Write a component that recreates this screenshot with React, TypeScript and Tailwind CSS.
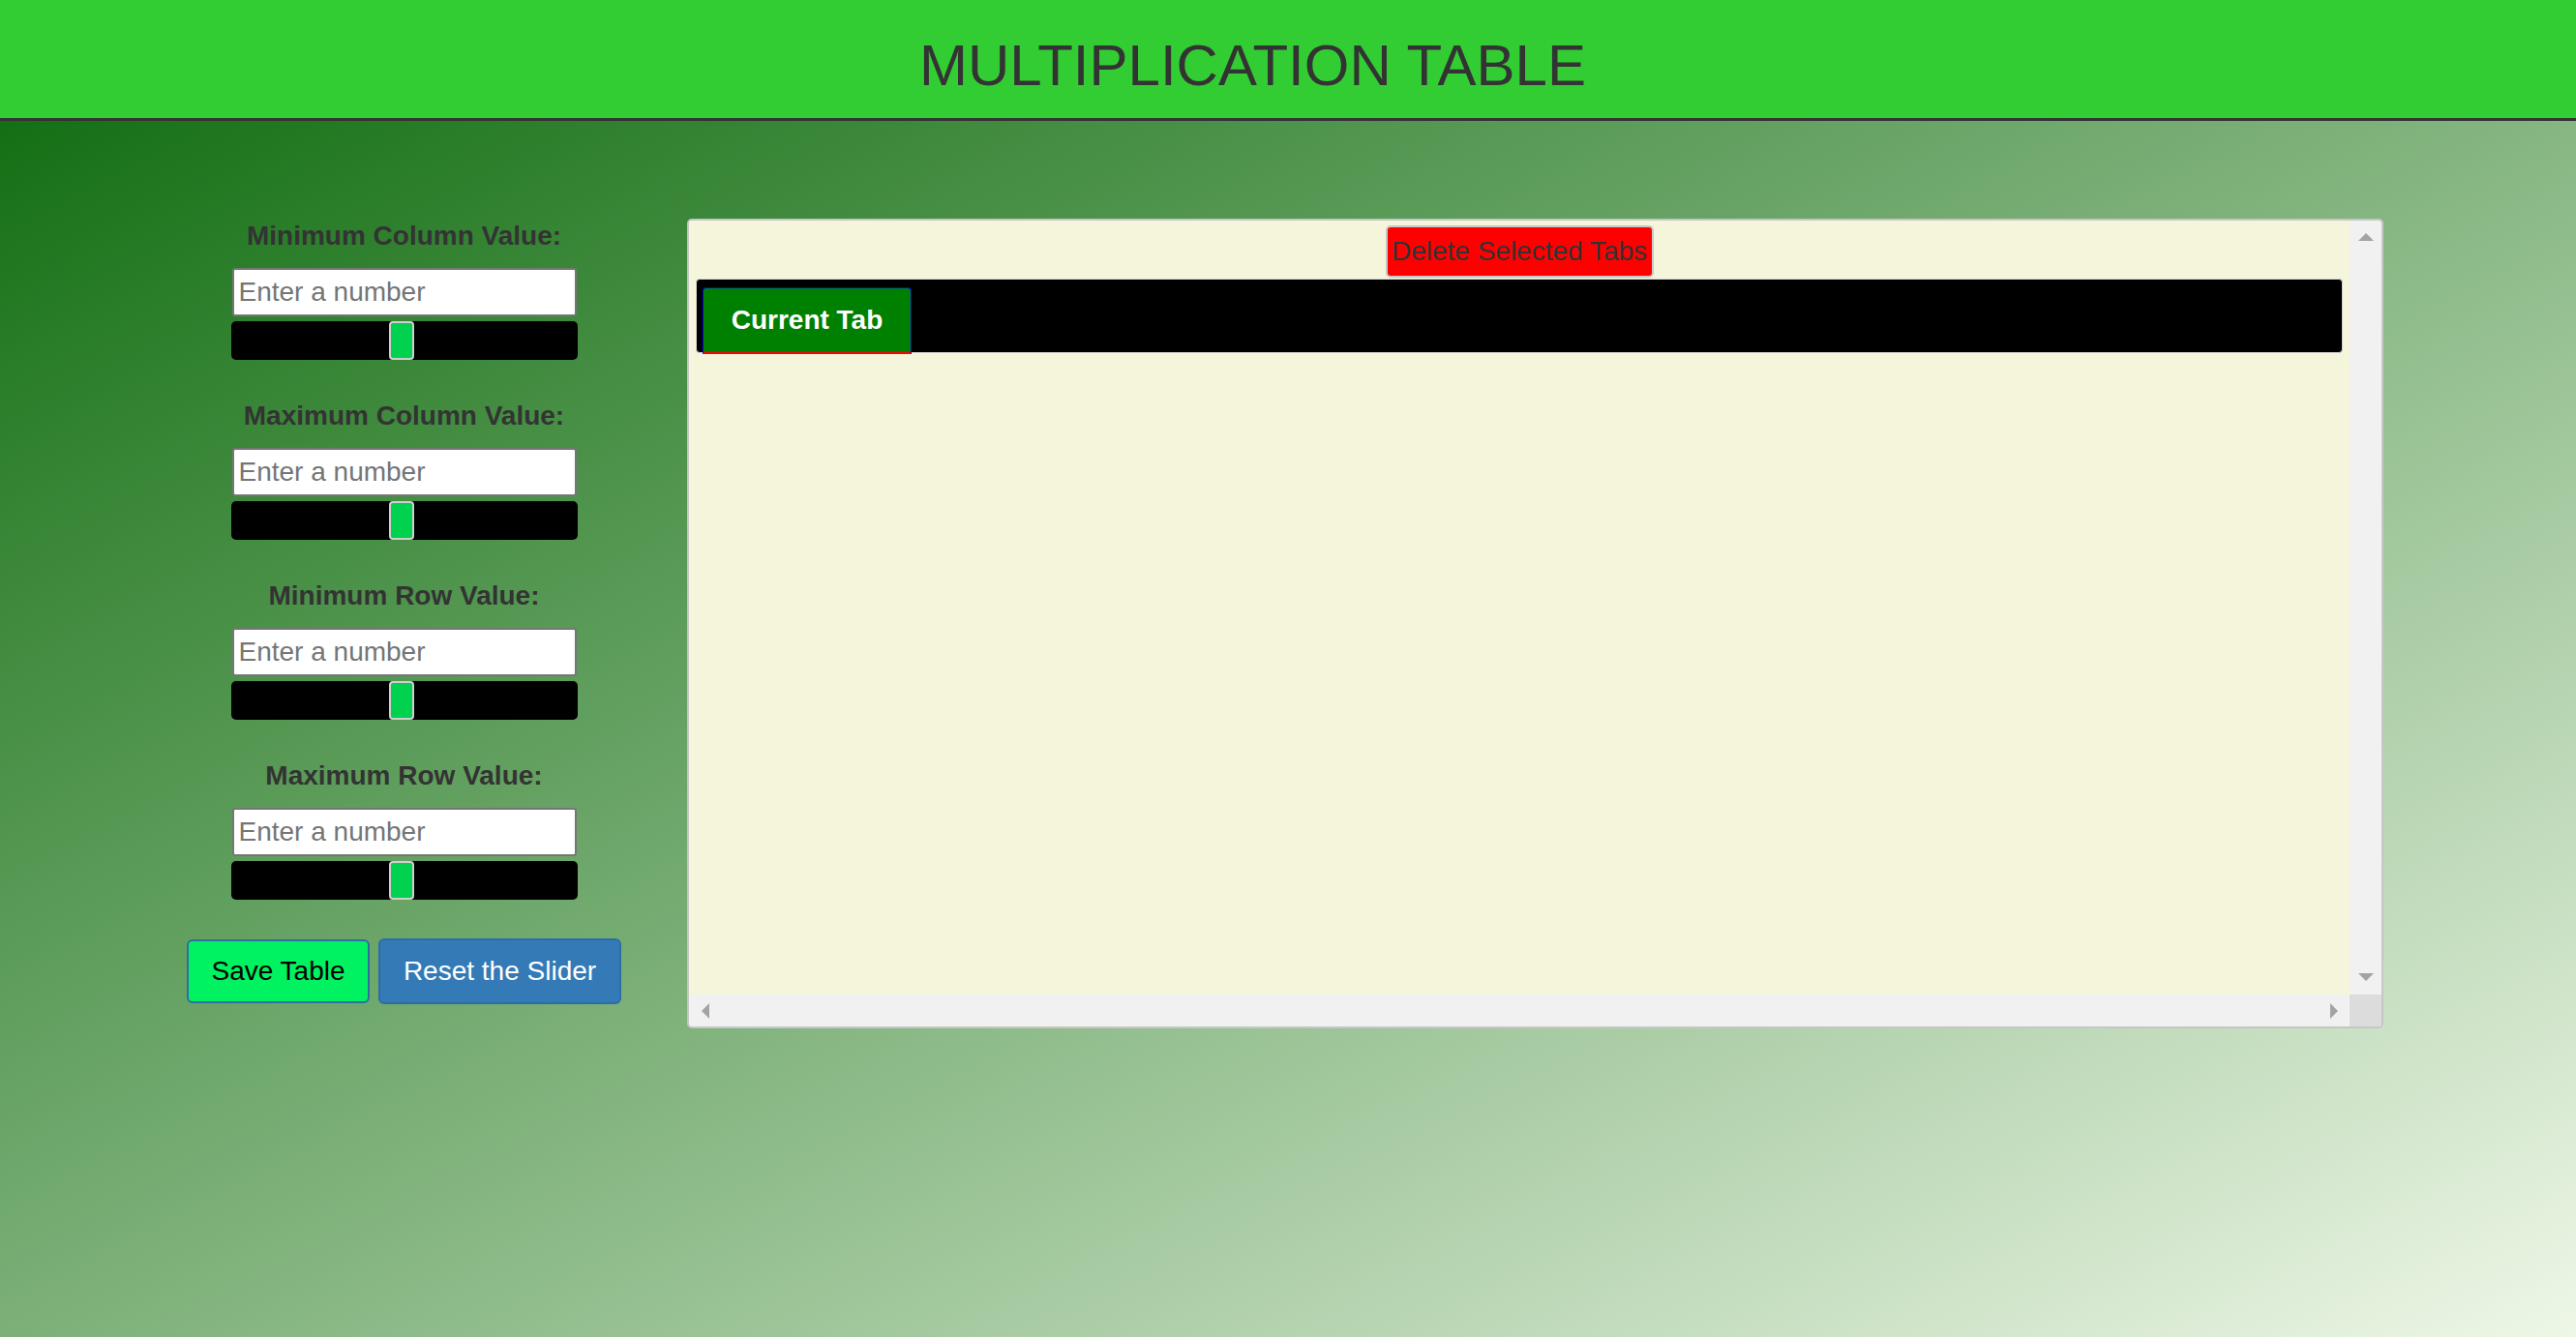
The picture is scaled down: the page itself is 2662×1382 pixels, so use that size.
import React from "react";

const FONT = "font-['Liberation_Sans',Arial,Helvetica,sans-serif]";

function Field({ label }: { label: string }) {
  return (
    <div className="flex flex-col items-center">
      <div className="text-[28px] leading-[32px] font-bold text-[#333] whitespace-nowrap">{label}</div>
      <input
        type="text"
        placeholder="Enter a number"
        className={`mt-[17px] w-[356px] h-[50px] bg-white border-2 border-[#767676] rounded-[3px] pl-[5px] text-[28px] text-black placeholder:text-[#757575] outline-none ${FONT}`}
      />
      <div className="mt-[5px] w-[358px] h-[40px] bg-black rounded-[5px] flex">
        <div className="ml-[163px] w-[26px] h-[40px] bg-[#00d24f] border-2 border-[#cfcfcf] rounded-[4px]" />
      </div>
    </div>
  );
}

export default function App() {
  return (
    <div className={`min-h-screen bg-[linear-gradient(to_bottom_right,#0a690a,#eef7e7)] ${FONT}`}>
      <header className="h-[125px] bg-[#32cd32] border-b-[3px] border-[#333]">
        <h1 className="pt-[35px] pr-[73px] text-center text-[60px] leading-[66px] font-normal text-[#333]">
          MULTIPLICATION TABLE
        </h1>
      </header>

      <main className="flex items-start pt-[101px]">
        <div className="ml-[180px] w-[475px] pt-[2px] flex flex-col items-center gap-[42px]">
          <Field label="Minimum Column Value:" />
          <Field label="Maximum Column Value:" />
          <Field label="Minimum Row Value:" />
          <Field label="Maximum Row Value:" />
          <div className="-mt-[2px] flex items-center gap-[9px]">
            <button className={`w-[189px] h-[66px] bg-[#00f260] border-2 border-[#2e6da4] rounded-[6px] text-[28px] text-black ${FONT}`}>
              Save Table
            </button>
            <button className={`w-[251px] h-[68px] bg-[#337ab7] border-2 border-[#2e6da4] rounded-[6px] text-[28px] text-white ${FONT}`}>
              Reset the Slider
            </button>
          </div>
        </div>

        <div className="ml-[55px] w-[1753px] h-[837px] border-2 border-[#c6c6c6] rounded-[5px] bg-[#f1f1f1] overflow-hidden flex flex-col">
          <div className="flex-1 flex min-h-0">
            <div className="flex-1 bg-[#f5f5dc] flex flex-col items-center pt-[5px]">
              <button className={`w-[277px] h-[54px] bg-[#ff0000] border-2 border-[#c8c8c8] rounded-[5px] text-[28px] text-[#333] whitespace-nowrap ${FONT}`}>
                Delete Selected Tabs
              </button>
              <div className="mt-[1px] self-stretch mx-[7px] bg-black border border-[#d3d3d3] rounded-[4px] pt-[8px] px-[6px] flex">
                <div className="w-[216px] h-[69px] -mb-[2px] bg-[#008000] border-t border-l border-r border-[#0000ff] border-b-2 border-b-[#ff0000] rounded-t-[4px] flex items-center justify-center text-white text-[28px] font-bold">
                  Current Tab
                </div>
              </div>
            </div>
            <div className="w-[33px] flex flex-col items-center justify-between pt-[13px] pb-[14px]">
              <svg width="16" height="8" viewBox="0 0 16 8">
                <polygon points="8,0 16,8 0,8" fill="#a3a3a3" />
              </svg>
              <svg width="16" height="8" viewBox="0 0 16 8">
                <polygon points="0,0 16,0 8,8" fill="#a3a3a3" />
              </svg>
            </div>
          </div>
          <div className="h-[33px] flex">
            <div className="flex-1 flex items-center justify-between pl-[13px] pr-[12px]">
              <svg width="8" height="16" viewBox="0 0 8 16">
                <polygon points="8,0 8,16 0,8" fill="#a3a3a3" />
              </svg>
              <svg width="8" height="16" viewBox="0 0 8 16">
                <polygon points="0,0 8,8 0,16" fill="#a3a3a3" />
              </svg>
            </div>
            <div className="w-[33px] bg-[#dcdcdc]" />
          </div>
        </div>
      </main>
    </div>
  );
}
